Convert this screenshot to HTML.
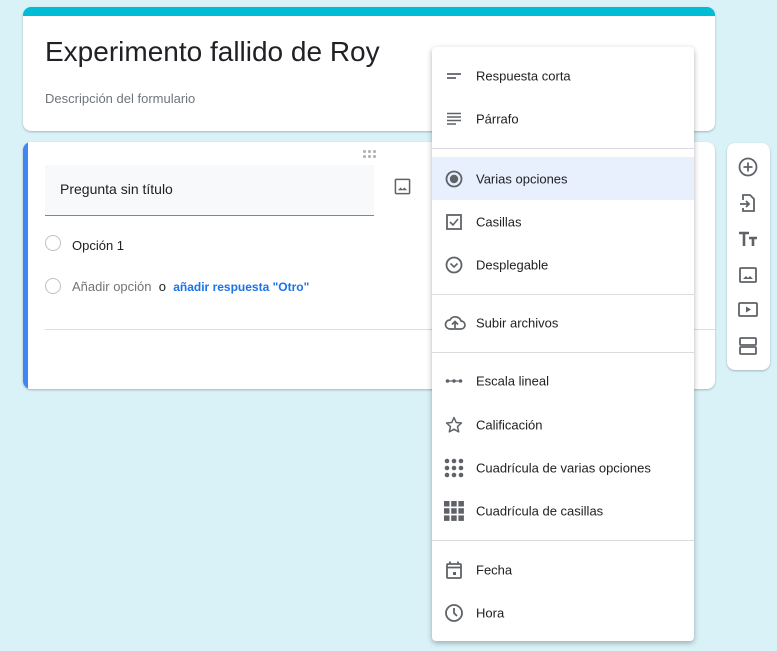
<!DOCTYPE html>
<html><head><meta charset="utf-8"><style>
*{box-sizing:border-box;margin:0;padding:0}
body{width:777px;height:651px;background:#d9f2f8;font-family:"Liberation Sans",Arial,sans-serif;position:relative;overflow:hidden;color:#202124}
.card{position:absolute;background:#fff;border-radius:8px;box-shadow:0 1px 2px rgba(0,0,0,.25)}
.abs{position:absolute}
.menu{position:absolute;left:432px;top:47px;width:262px;height:594px;background:#fff;border-radius:4px;box-shadow:0 2px 6px rgba(0,0,0,.3)}
.it{position:absolute;left:0;width:262px;height:43px;font-size:13px;color:#202124}
.it span{position:absolute;left:44px;top:50%;transform:translateY(-50%)}
.it svg{position:absolute;left:12px;top:50%;transform:translateY(-50%)}
.dv{position:absolute;left:0;width:262px;height:1px;background:#dadce0}
.side svg{position:absolute;left:10px}
.dot{position:absolute;width:2.5px;height:2.5px;background:#b0b4b8;border-radius:50%}
</style></head><body>
<div class="card" style="left:23px;top:7px;width:692px;height:124px;overflow:hidden">
<div class="abs" style="left:0;top:0;width:100%;height:9px;background:#00bcd4"></div>
<div class="abs" style="left:22px;top:29px;font-size:28px;color:#202124">Experimento fallido de Roy</div>
<div class="abs" style="left:22px;top:84px;font-size:13px;color:#70757a">Descripción del formulario</div>
</div>
<div class="card" style="left:23px;top:142px;width:692px;height:247px;overflow:hidden">
<div class="abs" style="left:0;top:0;width:5px;height:100%;background:#4285f4"></div>
<div class="dot" style="left:340px;top:8px"></div><div class="dot" style="left:345px;top:8px"></div><div class="dot" style="left:350px;top:8px"></div>
<div class="dot" style="left:340px;top:13px"></div><div class="dot" style="left:345px;top:13px"></div><div class="dot" style="left:350px;top:13px"></div>
<div class="abs" style="left:22px;top:23px;width:329px;height:51px;background:#f8f9fa;border-bottom:1px solid #80868b"></div>
<div class="abs" style="left:37px;top:39px;font-size:14px">Pregunta sin título</div>
<svg class="abs" style="left:371px;top:36px" width="17" height="17" viewBox="0 0 18 18"><rect x="1.5" y="1.5" width="15" height="15" rx="1" fill="none" stroke="#5f6368" stroke-width="1.6"/><path d="M4 13l3-3 2 2 2-2 3 3z" fill="#5f6368"/></svg>
<div class="abs" style="left:22px;top:93px;width:16px;height:16px;border:1.5px solid #bdc1c6;border-radius:50%"></div>
<div class="abs" style="left:49px;top:96px;font-size:13px">Opción 1</div>
<div class="abs" style="left:22px;top:136px;width:16px;height:16px;border:1.5px solid #bdc1c6;border-radius:50%"></div>
<div class="abs" style="left:49px;top:137px;font-size:13px;color:#70757a">Añadir opción <span style="color:#202124">&nbsp;o&nbsp;</span> <span style="color:#1a73e8;font-weight:bold;font-size:12px">añadir respuesta "Otro"</span></div>
<div class="abs" style="left:22px;top:187px;width:670px;height:1px;background:#dadce0"></div>
</div>
<div class="card side" style="left:727px;top:143px;width:43px;height:227px">
<svg style="top:13px" width="22" height="22" viewBox="0 0 22 22"><circle cx="11" cy="11" r="8.5" fill="none" stroke="#5f6368" stroke-width="1.8"/><path d="M11 6.5v9M6.5 11h9" stroke="#5f6368" stroke-width="1.8"/></svg>
<svg style="top:49px" width="22" height="22" viewBox="0 0 22 22"><path d="M6 8V3h7l4 4v12H6v-3" fill="none" stroke="#5f6368" stroke-width="1.8"/><path d="M3 12h9M9 9l3 3-3 3" fill="none" stroke="#5f6368" stroke-width="1.8"/></svg>
<svg style="top:85px" width="22" height="22" viewBox="0 0 22 22"><path d="M2 5h10M7 5v13M12 10h8M16 10v8" stroke="#5f6368" stroke-width="2.6"/></svg>
<svg style="top:121px" width="22" height="22" viewBox="0 0 22 22"><rect x="3" y="4" width="16" height="14" rx="1" fill="none" stroke="#5f6368" stroke-width="1.8"/><path d="M6 15l3-3 2 2 2-2 3 3z" fill="#5f6368"/></svg>
<svg style="top:156px" width="22" height="22" viewBox="0 0 22 22"><rect x="2" y="4" width="18" height="13" rx="1" fill="none" stroke="#5f6368" stroke-width="1.8"/><path d="M9 7.5v6l5-3z" fill="#5f6368"/></svg>
<svg style="top:192px" width="22" height="22" viewBox="0 0 22 22"><rect x="3" y="3" width="16" height="7" rx="1" fill="none" stroke="#5f6368" stroke-width="1.8"/><rect x="3" y="12" width="16" height="7" rx="1" fill="none" stroke="#5f6368" stroke-width="1.8"/></svg>
</div>
<div class="menu">
<div class="it" style="top:7px"><svg width="20" height="20" viewBox="0 0 20 20"><path d="M3 8h14M3 12h9" stroke="#5f6368" stroke-width="1.8"/></svg><span>Respuesta corta</span></div>
<div class="it" style="top:50px"><svg width="20" height="20" viewBox="0 0 20 20"><path d="M3 4.5h14M3 8h14M3 11.5h14M3 15h9" stroke="#5f6368" stroke-width="1.6"/></svg><span>Párrafo</span></div>
<div class="dv" style="top:101px"></div>
<div class="it" style="top:110px;background:#e8f0fe"><svg width="20" height="20" viewBox="0 0 20 20"><circle cx="10" cy="10" r="7.5" fill="none" stroke="#5f6368" stroke-width="1.8"/><circle cx="10" cy="10" r="4.2" fill="#5f6368"/></svg><span>Varias opciones</span></div>
<div class="it" style="top:153px"><svg width="20" height="20" viewBox="0 0 20 20"><rect x="3" y="3" width="14" height="14" fill="none" stroke="#5f6368" stroke-width="1.8"/><path d="M6 10l3 3 5-6" fill="none" stroke="#5f6368" stroke-width="1.6"/></svg><span>Casillas</span></div>
<div class="it" style="top:196px"><svg width="20" height="20" viewBox="0 0 20 20"><circle cx="10" cy="10" r="7.5" fill="none" stroke="#5f6368" stroke-width="1.8"/><path d="M6.5 8.5l3.5 3.5 3.5-3.5" fill="none" stroke="#5f6368" stroke-width="1.6"/></svg><span>Desplegable</span></div>
<div class="dv" style="top:247px"></div>
<div class="it" style="top:254px"><svg width="22" height="20" viewBox="0 0 22 20"><path d="M6 16h11a4 4 0 0 0 0-8 6 6 0 0 0-11-1 4.5 4.5 0 0 0 0 9z" fill="none" stroke="#5f6368" stroke-width="1.7"/><path d="M11 15V9M8 11.5l3-3 3 3" fill="none" stroke="#5f6368" stroke-width="1.7"/></svg><span>Subir archivos</span></div>
<div class="dv" style="top:305px"></div>
<div class="it" style="top:312px"><svg width="20" height="20" viewBox="0 0 20 20"><path d="M2 10h16" stroke="#5f6368" stroke-width="1.2"/><circle cx="3.5" cy="10" r="1.8" fill="#5f6368"/><circle cx="10" cy="10" r="1.8" fill="#5f6368"/><circle cx="16.5" cy="10" r="1.8" fill="#5f6368"/></svg><span>Escala lineal</span></div>
<div class="it" style="top:356px"><svg width="20" height="20" viewBox="0 0 20 20"><path d="M10 2.5l2.2 5 5.3.5-4 3.6 1.2 5.3L10 14.2 5.3 16.9l1.2-5.3-4-3.6 5.3-.5z" fill="none" stroke="#5f6368" stroke-width="1.5" stroke-linejoin="round"/></svg><span>Calificación</span></div>
<div class="it" style="top:399px"><svg width="22" height="22" viewBox="0 0 22 22" style="left:11px"><g fill="#5f6368"><circle cx="4" cy="4" r="2.3"/><circle cx="11" cy="4" r="2.3"/><circle cx="18" cy="4" r="2.3"/><circle cx="4" cy="11" r="2.3"/><circle cx="11" cy="11" r="2.3"/><circle cx="18" cy="11" r="2.3"/><circle cx="4" cy="18" r="2.3"/><circle cx="11" cy="18" r="2.3"/><circle cx="18" cy="18" r="2.3"/></g></svg><span>Cuadrícula de varias opciones</span></div>
<div class="it" style="top:442px"><svg width="22" height="22" viewBox="0 0 22 22" style="left:11px"><g fill="#5f6368"><rect x="1" y="1" width="5.5" height="5.5"/><rect x="8.2" y="1" width="5.5" height="5.5"/><rect x="15.4" y="1" width="5.5" height="5.5"/><rect x="1" y="8.2" width="5.5" height="5.5"/><rect x="8.2" y="8.2" width="5.5" height="5.5"/><rect x="15.4" y="8.2" width="5.5" height="5.5"/><rect x="1" y="15.4" width="5.5" height="5.5"/><rect x="8.2" y="15.4" width="5.5" height="5.5"/><rect x="15.4" y="15.4" width="5.5" height="5.5"/></g></svg><span>Cuadrícula de casillas</span></div>
<div class="dv" style="top:493px"></div>
<div class="it" style="top:501px"><svg width="20" height="20" viewBox="0 0 20 20"><rect x="3" y="4" width="14" height="14" rx="1" fill="none" stroke="#5f6368" stroke-width="1.8"/><path d="M3 7.5h14M6 1.5v3M14 1.5v3" stroke="#5f6368" stroke-width="1.8"/><rect x="9" y="12" width="3" height="3" fill="#5f6368"/></svg><span>Fecha</span></div>
<div class="it" style="top:544px"><svg width="20" height="20" viewBox="0 0 20 20"><circle cx="10" cy="10" r="8" fill="none" stroke="#5f6368" stroke-width="1.8"/><path d="M10 5v5l3 3" fill="none" stroke="#5f6368" stroke-width="1.8"/></svg><span>Hora</span></div>
</div>
</body></html>
